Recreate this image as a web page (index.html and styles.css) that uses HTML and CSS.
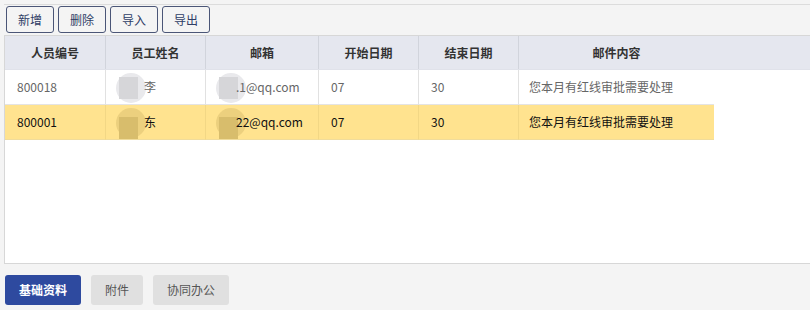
FILE: index.html
```html
<!DOCTYPE html>
<html>
<head>
<meta charset="utf-8">
<link rel="stylesheet" href="styles.css">
</head>
<body>
<div class="page">
  <div class="toolbar">
    <button class="btn">新增</button>
    <button class="btn">删除</button>
    <button class="btn">导入</button>
    <button class="btn">导出</button>
  </div>
  <div class="grid">
    <div class="thead">
      <div class="th c1">人员编号</div>
      <div class="th c2">员工姓名</div>
      <div class="th c3">邮箱</div>
      <div class="th c4">开始日期</div>
      <div class="th c5">结束日期</div>
      <div class="th c6">邮件内容</div>
      <div class="th fill"></div>
    </div>
    <div class="tbody">
      <div class="tr">
        <div class="td c1">800018</div>
        <div class="td c2"><span class="blob"></span><span class="shown">李</span></div>
        <div class="td c3"><span class="blob blob2"></span><span class="shown2">.1@qq.com</span></div>
        <div class="td c4">07</div>
        <div class="td c5">30</div>
        <div class="td c6">您本月有红线审批需要处理</div>
      </div>
      <div class="tr sel">
        <div class="td c1">800001</div>
        <div class="td c2"><span class="blob"></span><span class="shown">东</span></div>
        <div class="td c3"><span class="blob blob2"></span><span class="shown2">22@qq.com</span></div>
        <div class="td c4">07</div>
        <div class="td c5">30</div>
        <div class="td c6">您本月有红线审批需要处理</div>
      </div>
    </div>
  </div>
  <div class="tabs">
    <div class="tab active">基础资料</div>
    <div class="tab">附件</div>
    <div class="tab">协同办公</div>
  </div>
</div>
</body>
</html>
```
FILE: styles.css
```css
* { box-sizing: border-box; }
html, body { margin: 0; padding: 0; background: #f4f4f4; }
body { font-family: "Noto Sans CJK SC", "Microsoft YaHei", sans-serif; font-size: 12px; color: #333; }
.page { width: 810px; height: 310px; padding-top: 4px; }
.toolbar {
  border-top: 1px solid #dcdcdc;
  margin-left: 4px;
  padding: 1px 0 0 2px;
  display: flex;
  gap: 4px;
  height: 31px;
}
.btn {
  width: 48px; height: 27px;
  border: 1px solid #4b5677;
  border-radius: 3px;
  background: #f4f4f4;
  color: #2f3d66;
  font-family: inherit; font-size: 12px;
  padding: 0;
  line-height: 25px;
}
.grid {
  margin-left: 4px;
  height: 229px;
  border: 1px solid #d7d7d7;
  border-right: none;
  background: #fff;
  overflow: hidden;
}
.thead { display: flex; height: 34px; background: #e5e7ef; border-bottom: 1px solid #e0e2ea; }
.th { border-right: 1px solid #d1d4dc; text-align: center; line-height: 33px; font-weight: bold; color: #333; }
.th.c6 { border-right: none; }
.th.fill { flex: 1; border-right: none; }
.c1 { width: 101px; }
.c2 { width: 100px; }
.c3 { width: 113px; }
.c4 { width: 100px; }
.c5 { width: 100px; }
.c6 { width: 195px; }
.tr { display: flex; height: 35px; }
.td { border-right: 1px solid #e1e1e1; border-bottom: 1px solid #e4e4e4; line-height: 34px; padding-left: 12px; color: #666; position: relative; }
.td.c6 { border-right: none; padding-left: 10px; }
.tr.sel .td { background: #ffe38f; color: #111; border-right-color: #f2d785; border-bottom-color: #f0dc9c; }
.shown { position: absolute; left: 38px; }
.shown2 { position: absolute; left: 30px; }
.blob {
  position: absolute; left: 10px; top: 3px;
  width: 30px; height: 30px; border-radius: 50%;
  background: #e9e9ec;
}
.blob::after {
  content: ""; position: absolute; left: 3px; top: 4px; width: 19px; height: 22px; background: #d6d6d9;
}
.tr.sel .blob { background: #ecd07e; }
.tr.sel .blob::after { background: #d8bd6c; top: 9px; }
.tabs { display: flex; gap: 10px; padding: 11px 0 0 5px; }
.tab {
  height: 30px; line-height: 30px; padding: 0 14px;
  background: #e0e0e0; color: #555; border-radius: 3px;
}
.tab.active { background: #2e4a9f; color: #fff; font-weight: bold; }
```
